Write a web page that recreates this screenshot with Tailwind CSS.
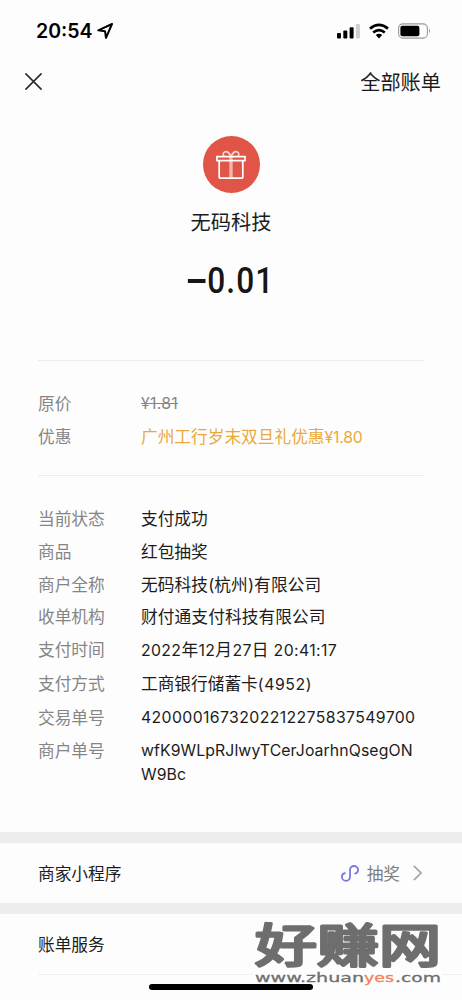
<!DOCTYPE html>
<html lang="zh-CN">

<head>
  <meta charset="UTF-8">
  <meta name="viewport" content="width=device-width, initial-scale=1.0">
  <title>账单详情</title>
  <script src="https://cdn.jsdelivr.net/npm/@tailwindcss/browser@4"></script>
</head>

<body class="bg-[#fdfdfd] font-['Inter','Noto_Sans_CJK_SC',sans-serif] text-[#1c1c1c]">
  <div class="relative w-[462px] h-[1000px] overflow-hidden flex flex-col">

    <!-- Status bar -->
    <header class="h-[61px] shrink-0 flex items-center justify-between pl-9 pr-[31px] text-black">
      <div class="flex items-center gap-[5px]">
        <span class="text-[19.5px] font-semibold leading-6">20:54</span>
        <svg class="w-4 h-4" viewBox="0 0 16 16" fill="none" stroke="currentColor" stroke-width="2" stroke-linejoin="round">
          <path d="M15 1 L1.3 7.3 L8 8.2 L9 14.8 Z" />
        </svg>
      </div>
      <div class="flex items-center">
        <svg class="w-[23px] h-4" viewBox="0 0 23 16">
          <rect x="0" y="10" width="4" height="5.5" rx="1" />
          <rect x="6.3" y="7.5" width="4" height="8" rx="1" />
          <rect x="12.6" y="4.2" width="4" height="11.3" rx="1" />
          <rect x="18.9" y="1" width="4" height="14.5" rx="1" fill="#cfcfcf" />
        </svg>
        <svg class="ml-[9px] w-5 h-4" viewBox="0 0 20 16" fill="none" stroke="currentColor" stroke-width="2.7">
          <path d="M1 5.6 Q10 -1.8 19 5.6" />
          <path d="M4.2 9.6 Q10 4.6 15.8 9.6" />
          <path d="M6.8 12 Q10 9.4 13.2 12 L10 15.4 Z" fill="currentColor" stroke="none" />
        </svg>
        <svg class="ml-[9px] w-[33px] h-4" viewBox="0 0 33 16">
          <rect x="0.6" y="0.9" width="28.8" height="14.2" rx="4.4" fill="none" stroke="#9a9a9a" stroke-width="1.1" />
          <rect x="2.4" y="2.7" width="19" height="10.6" rx="2" />
          <path d="M31 5.6 Q33 8 31 10.4 Z" fill="#9a9a9a" />
        </svg>
      </div>
    </header>

    <!-- Nav -->
    <nav class="h-10 shrink-0 flex items-center justify-between pl-[25px] pr-[21px]">
      <svg class="w-[17px] h-[17px]" viewBox="0 0 17 17" fill="none" stroke="#2b2b2b" stroke-width="1.6" stroke-linecap="round">
        <path d="M0.9 0.9 L16.1 16.1 M16.1 0.9 L0.9 16.1" />
      </svg>
      <span class="pt-1 text-[20.2px] leading-7">全部账单</span>
    </nav>

    <!-- Merchant and amount -->
    <section class="h-[259px] shrink-0 flex flex-col items-center pt-[35px]">
      <div class="w-[57px] h-[57px] rounded-full bg-[#e05547] flex items-center justify-center">
        <svg class="w-[30px] h-[30px]" viewBox="0 0 30 30" fill="none" stroke="#fff" stroke-width="1.7" stroke-linejoin="round">
          <path d="M15 6.5 V28" stroke="#f3b5ae" stroke-width="3.4" />
          <path d="M14.7 6.4 C13.6 2.6 11.2 1.2 9.2 1.8 C6.8 2.6 6.6 5 8.2 6.4 M15.3 6.4 C16.4 2.6 18.8 1.2 20.8 1.8 C23.2 2.6 23.4 5 21.8 6.4" stroke="#f9d5d0" />
          <path d="M0.9 6.6 H29.1 V10.6 H0.9 Z" />
          <path d="M3.2 10.8 V27.2 Q3.2 28.2 4.2 28.2 H25.8 Q26.8 28.2 26.8 27.2 V10.8" />
        </svg>
      </div>
      <h1 class="mt-4 text-[20.2px] leading-7">无码科技</h1>
      <p class="mt-[19px] flex items-center font-['Roboto'] text-[36px] leading-[50px] font-medium text-[#161616] scale-x-[0.88]">
        <span class="mr-[2px] mb-[1px] w-[20px] h-1 bg-[#161616]"></span>
        <span class="tracking-[1.2px]">0.01</span>
      </p>
    </section>

    <!-- Price -->
    <dl class="mx-[38px] h-[115px] shrink-0 border-t border-[#ececec] pt-[31px] text-[16.7px] leading-6 flex flex-col gap-[9px]">
      <div class="flex">
        <dt class="w-[103px] text-[#858585]">原价</dt>
        <dd class="text-[15.8px] tracking-[0.3px] text-[#858585] line-through">¥1.81</dd>
      </div>
      <div class="flex">
        <dt class="w-[103px] text-[#858585]">优惠</dt>
        <dd class="text-[#eaa93c] whitespace-nowrap">广州工行岁末双旦礼优惠<span class="text-[15.8px] tracking-[-0.2px]">¥1.80</span></dd>
      </div>
    </dl>

    <!-- Details -->
    <dl class="mx-[38px] h-[357px] shrink-0 border-t border-[#ececec] pt-[31px] text-[16.7px] leading-6 flex flex-col gap-[8.8px]">
      <div class="flex">
        <dt class="w-[103px] text-[#858585]">当前状态</dt>
        <dd>支付成功</dd>
      </div>
      <div class="flex">
        <dt class="w-[103px] text-[#858585]">商品</dt>
        <dd>红包抽奖</dd>
      </div>
      <div class="flex">
        <dt class="w-[103px] text-[#858585]">商户全称</dt>
        <dd class="tracking-[0.1px]">无码科技(杭州)有限公司</dd>
      </div>
      <div class="flex">
        <dt class="w-[103px] text-[#858585]">收单机构</dt>
        <dd class="tracking-[0.1px]">财付通支付科技有限公司</dd>
      </div>
      <div class="flex">
        <dt class="w-[103px] text-[#858585]">支付时间</dt>
        <dd class="tracking-[0.38px] whitespace-nowrap"><span class="text-[15.8px]">2022</span>年<span class="text-[15.8px]">12</span>月<span class="text-[15.8px]">27</span>日<span class="text-[15.8px]"> 20:41:17</span></dd>
      </div>
      <div class="flex">
        <dt class="w-[103px] text-[#858585]">支付方式</dt>
        <dd>工商银行储蓄卡<span class="text-[15.8px] tracking-[0.6px]">(4952)</span></dd>
      </div>
      <div class="flex">
        <dt class="w-[103px] text-[#858585]">交易单号</dt>
        <dd class="text-[15.8px] tracking-[0.39px] whitespace-nowrap">4200001673202212275837549700</dd>
      </div>
      <div class="flex">
        <dt class="w-[103px] text-[#858585]">商户单号</dt>
        <dd class="text-[15.8px] tracking-[0.1px] whitespace-nowrap">wfK9WLpRJlwyTCerJoarhnQsegON<br>W9Bc</dd>
      </div>
    </dl>

    <!-- Mini program -->
    <section class="h-[82px] shrink-0 border-y-[11px] border-[#ededed] flex items-center justify-between pl-[38px] pr-[40px] text-[16.7px] leading-6">
      <span class="pt-[2px]">商家小程序</span>
      <div class="flex items-center text-[#7d7d7d]">
        <svg class="w-[18px] h-[17px] mr-2" viewBox="0 0 18 17" fill="none" stroke="#7878dc" stroke-width="1.8" stroke-linecap="round">
          <path d="M3.9 8.2 C1.9 8.7 0.9 10.2 0.9 11.7 C0.9 14 2.9 15.8 5.1 15.8 C7.4 15.8 9 14 9 11.8 V5 C9 2.8 10.7 1 12.9 1 C15.1 1 17.1 2.7 17.1 5 C17.1 6.6 16 8 14.1 8.6" />
        </svg>
        <span class="pt-[2px]">抽奖</span>
        <svg class="w-[9px] h-4 ml-[13px]" viewBox="0 0 9 16" fill="none" stroke="#a5a5a5" stroke-width="1.7">
          <path d="M0.8 0.8 L8 8 L0.8 15.2" />
        </svg>
      </div>
    </section>

    <!-- Bill services -->
    <section class="ml-[38px] h-[61px] shrink-0 border-b border-[#f0f0f0] flex items-center pt-[2px] text-[16.7px] leading-6">账单服务</section>

    <!-- Watermark -->
    <svg class="absolute left-[250px] top-[892px] w-[200px] h-[108px] text-[#6e6e6e]" viewBox="0 -20 200 108" fill="currentColor">
      <rect x="3" y="58" width="189" height="13" fill="#fdfdfd" />
      <text x="5" y="49.5" class="font-['Noto_Sans_CJK_SC'] text-[46px]" stroke="currentColor" stroke-width="3" stroke-linejoin="round" textLength="186" lengthAdjust="spacingAndGlyphs">好赚网</text>
      <g class="font-['DejaVu_Sans'] text-[13px]" stroke-width="0.3">
        <text x="5" y="69.5" textLength="109" lengthAdjust="spacingAndGlyphs" stroke="currentColor">www.zhuan</text>
        <text x="114" y="69.5" textLength="30" lengthAdjust="spacingAndGlyphs" fill="#f4805c" stroke="#f4805c">yes</text>
        <text x="145" y="69.5" textLength="46" lengthAdjust="spacingAndGlyphs" stroke="currentColor">.com</text>
      </g>
    </svg>

    <!-- Home indicator -->
    <div class="absolute left-[149px] top-[984px] w-[164px] h-[6px] rounded-full bg-black"></div>
  </div>
</body>

</html>
